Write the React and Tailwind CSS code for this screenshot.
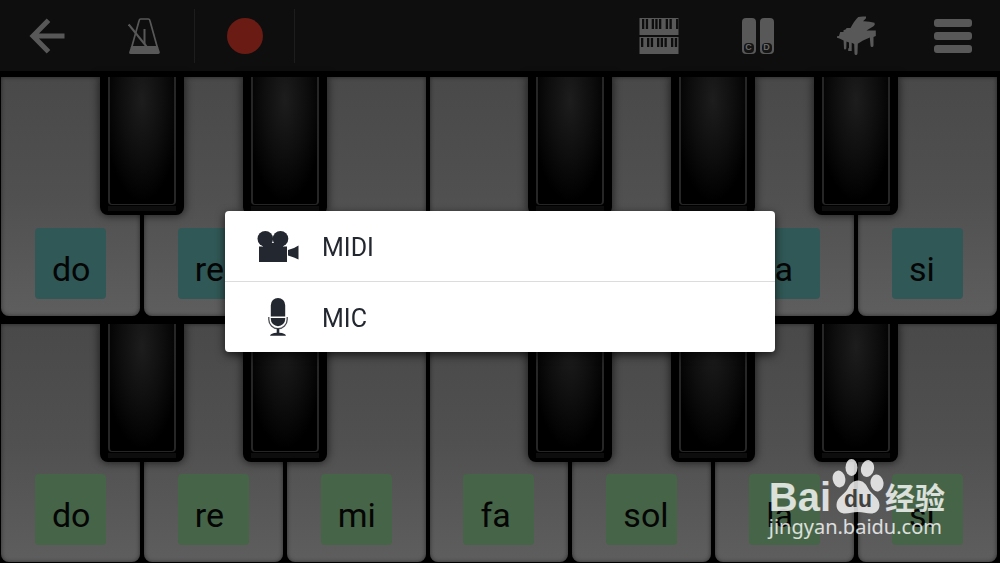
import React from "react";

const NOTES = ["do", "re", "mi", "fa", "sol", "la", "si"];
const SHARPS = new Set([0, 1, 3, 4, 5]);

function BackIcon() {
  return (
    <svg className="h-9 w-9" viewBox="0 0 36 36" fill="none" stroke="currentColor" strokeWidth="5" aria-hidden="true">
      <path d="M19.500 2.200 4 18l15.500 15.800M4 18h31.500" />
    </svg>
  );
}

function MetronomeIcon() {
  return (
    <svg className="h-9 w-8" viewBox="0 0 32 36" fill="none" stroke="currentColor" strokeLinejoin="round" aria-hidden="true">
      <path d="M3.500 30 11.200 2.200Q11.500 1 12.700 1h7.600Q21.500 1 21.800 2.200L29.500 30" strokeWidth="1.700" />
      <path d="M3.200 28h26.600l2 6q.3 2-1.500 2H2.700q-2 0-1.500-2z" fill="currentColor" stroke="none" />
      <path d="M16.500 11v15" strokeWidth="2" />
      <path d="M.7 6.500 18.500 28.500" strokeWidth="2" />
    </svg>
  );
}

function TwoRowsIcon() {
  return (
    <svg className="h-9 w-10" viewBox="0 0 40 36" aria-hidden="true">
      <path fill="currentColor" d="M.5 0h39v17H.5zM.5 19h39v17H.5z" />
      <g fill="#0e0e0e">
        <path d="M3 1h2.300v10H3zM6.800 1h2.300v10H6.800zM12.700 1h2.300v10h-2.300zM16.300 1h2.300v10h-2.300zM20 1h2.300v10H20zM26.700 1h2.300v10h-2.300zM30.500 1h2.300v10h-2.300zM37 1h2.300v10H37z" />
        <path d="M2 20h2.300v9H2zM8 20h2.300v9H8zM11.800 20h2.300v9h-2.300zM18 20h2.300v9H18zM21.700 20h2.300v9h-2.300zM25.500 20h2.300v9h-2.300zM32 20h2.300v9H32zM35.800 20h2.300v9h-2.300z" />
      </g>
    </svg>
  );
}

function TwoKeysIcon() {
  return (
    <span className="flex gap-1" aria-hidden="true">
      {["C", "D"].map((n) => (
        <span key={n} className="flex h-9 w-[14px] items-end justify-center rounded-sm bg-[#585858] pb-px">
          <span className="flex h-[10px] w-[10px] items-center justify-center rounded-sm bg-[#151515] font-['Liberation_Sans'] text-[9px] leading-none font-bold text-[#6a6a6a]">
            {n}
          </span>
        </span>
      ))}
    </span>
  );
}

function PianoIcon() {
  return (
    <svg className="h-10 w-10" viewBox="0 0 40 40" fill="currentColor" aria-hidden="true">
      <path d="M21.300 1Q24 .1 29 .5V2.200L26 5.200Q32 5 37.500 6.800 38.500 9 36.500 10.300L29.500 14.500H38.800V20L36.500 21V29.500Q36.500 31 35 31 33.500 31 33.500 29.500L32.800 21.500 26 24.500 20.800 27.800 20.500 37.500Q20.300 39 19 39 17.500 39 17.500 37.500L17.200 28 14.700 26.800V35H11.200V32.500L12 32V26.500L9.500 25.500 9.300 32.500Q9 33.500 8 33.500 7 33.500 7 32.500L6.600 24.500 2.500 22.500 0 21.700V20.300L2 20 3.200 16H6.500V14.200L9 13.200 9.500 12H13.500Q17.500 4.500 21.300 1Z" />
    </svg>
  );
}

function CameraIcon() {
  return (
    <svg className="h-8 w-[42px]" viewBox="0 0 42 32" fill="#23272f" aria-hidden="true">
      <circle cx="8.300" cy="8.800" r="7.800" />
      <circle cx="23.500" cy="8.800" r="7.800" />
      <path d="M6 13h20v4H6zM2 16.500h28V32H2zM31 20 37 18l4.500-2.500v14L37 27.500l-6-2z" />
    </svg>
  );
}

function MicIcon() {
  return (
    <svg className="h-[38px] w-5" viewBox="0 0 20 38" fill="#23272f" aria-hidden="true">
      <path d="M2.800 7.200a7.200 7.200 0 0 1 14.400 0V18.500H2.800zM2.800 20h14.400v1a7.200 7.200 0 0 1-14.400 0z" />
      <path d="M.8 19v2.500a9.200 9.200 0 0 0 18.400 0V19" fill="none" stroke="#4b4e54" strokeWidth="1.300" />
      <path d="M8.700 30.500h2.600v4.300q6 .3 6.700 2.900H2q.7-2.600 6.700-2.900z" />
    </svg>
  );
}

function ToolButton({ label, className, children }) {
  return (
    <button type="button" aria-label={label} className={`flex h-[54px] items-center justify-center text-[#585858] ${className}`}>
      {children}
    </button>
  );
}

function Toolbar() {
  return (
    <header className="flex h-[71px] items-center justify-between bg-[#0e0e0e]">
      <div className="flex">
        <ToolButton label="Back" className="w-[94px]"><BackIcon /></ToolButton>
        <ToolButton label="Metronome" className="w-[101px] border-r border-[#1d1d1d]"><MetronomeIcon /></ToolButton>
        <ToolButton label="Record" className="w-[100px] border-r border-[#1d1d1d]">
          <span className="h-9 w-9 rounded-full bg-[#6a1b14]" />
        </ToolButton>
      </div>
      <div className="flex">
        <ToolButton label="Keyboard rows" className="w-[99px]"><TwoRowsIcon /></ToolButton>
        <ToolButton label="Key labels" className="w-[99px]"><TwoKeysIcon /></ToolButton>
        <ToolButton label="Instrument" className="w-[99px]"><PianoIcon /></ToolButton>
        <ToolButton label="Menu" className="w-[94px]">
          <span className="flex w-[38px] flex-col gap-[5px]">
            <span className="h-2 rounded-[3px] bg-[#585858]" />
            <span className="h-2 rounded-[3px] bg-[#585858]" />
            <span className="h-2 rounded-[3px] bg-[#585858]" />
          </span>
        </ToolButton>
      </div>
    </header>
  );
}

function BlackKey({ note }) {
  return (
    <button
      type="button"
      aria-label={`${note} sharp`}
      className="absolute top-0 left-full z-10 ml-0.5 flex h-[58%] w-[84px] -translate-x-1/2 flex-col rounded-b-lg bg-black px-2 pb-1 shadow-[0_0_8px_1px_rgba(0,0,0,0.6)]"
    >
      <span className="w-full flex-1 rounded-b border-x-2 border-b border-[#262626] bg-[radial-gradient(ellipse_60%_80%_at_50%_18%,#1d1d1d_0%,#0e0e0e_55%,#000_100%)]" />
      <span className="mt-px h-[5px] w-full bg-[#0d0d0d]" />
    </button>
  );
}

function Keyboard({ tagClass }) {
  return (
    <section className="grid flex-1 grid-cols-7 gap-1 pr-[3px] pl-px">
      {NOTES.map((note, i) => (
        <div key={note} className="relative flex">
          <button
            type="button"
            className="flex w-full items-end justify-center rounded-b-lg bg-linear-to-b from-[#494949] via-[#505050] to-[#5e5e5e] pb-[17px] shadow-[inset_0_0_4px_rgba(0,0,0,0.5)]"
          >
            <span className={`flex h-[71px] w-[71px] items-end rounded pb-2 pl-[17px] font-['Roboto'] text-[34px] leading-[44px] text-[#050505] ${tagClass}`}>
              {note}
            </span>
          </button>
          {SHARPS.has(i) && <BlackKey note={note} />}
        </div>
      ))}
    </section>
  );
}

function MenuItem({ name, icon }) {
  return (
    <button
      type="button"
      role="menuitem"
      className="flex h-[70px] w-full items-center gap-4 pl-[25px] font-['Roboto'] text-[25px] leading-8 text-[#23272f]"
    >
      <span className="flex w-14 justify-center">{icon}</span>
      <span className="pt-[3px]">{name}</span>
    </button>
  );
}

function RecordMenu() {
  return (
    <div className="fixed inset-0 z-30 flex items-center justify-center">
      <div role="menu" className="w-[55%] rounded-sm bg-white shadow-[0_3px_10px_rgba(0,0,0,0.7)]">
        <MenuItem name="MIDI" icon={<CameraIcon />} />
        <hr className="border-[#dcdcdc]" />
        <MenuItem name="MIC" icon={<MicIcon />} />
      </div>
    </div>
  );
}

function Watermark() {
  return (
    <div className="pointer-events-none absolute right-[55px] bottom-6 z-20 flex flex-col text-white/80">
      <div className="flex h-[56px] items-end gap-px">
        <span className="font-['Liberation_Sans'] text-[40px] leading-9 font-bold">Bai</span>
        <span className="relative flex h-[56px] w-[52px] items-end justify-center">
          <svg className="absolute inset-0 h-full w-full" viewBox="0 0 52 56" fill="currentColor" aria-hidden="true">
            <ellipse cx="7" cy="20" rx="6.300" ry="8.500" transform="rotate(-10 7 20)" />
            <ellipse cx="19.500" cy="8.500" rx="6" ry="8.500" />
            <ellipse cx="35.500" cy="9.500" rx="6.500" ry="8.500" transform="rotate(12 35.500 9.500)" />
            <ellipse cx="45" cy="24" rx="6.500" ry="8.500" transform="rotate(-8 45 24)" />
            <path d="M26 21.500c5 0 8 3.500 10.500 8.500 3 5.500 11 8.500 11 16 0 5-3.500 8.500-8.500 8.500-4.500 0-8-1.500-13-1.500s-8.500 1.500-13 1.500c-5 0-8.500-3.500-8.500-8.500 0-7.500 8-10.500 11-16 2.500-5 5.500-8.500 10.500-8.500z" />
          </svg>
          <span className="relative pb-1 font-['Liberation_Sans'] text-[23px] leading-6 font-bold text-[#404040]">du</span>
        </span>
        <span className="font-['Noto_Sans_CJK_SC',sans-serif] text-[30px] leading-[38px] font-bold">经验</span>
      </div>
      <a href="https://jingyan.baidu.com" className="font-['Noto_Sans'] text-[20px] leading-6">jingyan.baidu.com</a>
    </div>
  );
}

export default function App() {
  return (
    <main className="relative flex min-h-screen flex-col bg-black">
      <Toolbar />
      <div className="mt-1.5 flex flex-1 flex-col gap-2 pb-px">
        <Keyboard tagClass="bg-[#305856]" />
        <Keyboard tagClass="bg-[#466447]" />
      </div>
      <RecordMenu />
      <Watermark />
    </main>
  );
}
